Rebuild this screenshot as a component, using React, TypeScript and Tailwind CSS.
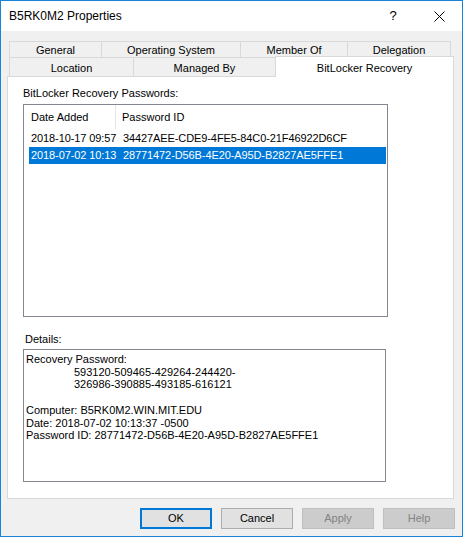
const font = "font-['Segoe_UI','Liberation_Sans',Arial,sans-serif]";

function Tab({ label, w, last }: { label: string; w: string; last?: boolean }) {
  return (
    <div
      className={`${w} h-full flex items-center justify-center pt-[2px] border-t border-l border-[#d9d9d9] ${last ? 'border-r' : ''} bg-[#f0f0f0] text-[11px] text-black whitespace-nowrap`}
    >
      {label}
    </div>
  );
}

function Button({ label, primary, disabled }: { label: string; primary?: boolean; disabled?: boolean }) {
  let cls = 'border border-[#adadad] bg-[#e1e1e1] text-black';
  if (primary) cls = 'border-2 border-[#0078d7] bg-[#e1e1e1] text-black';
  if (disabled) cls = 'border border-[#bfbfbf] bg-[#cccccc] text-[#838383]';
  return (
    <div className={`w-[72px] h-[21px] flex items-center justify-center text-[11px] ${cls}`}>{label}</div>
  );
}

const rows = [
  { date: '2018-10-17 09:57', id: '34427AEE-CDE9-4FE5-84C0-21F46922D6CF', selected: false },
  { date: '2018-07-02 10:13', id: '28771472-D56B-4E20-A95D-B2827AE5FFE1', selected: true },
];

export default function App() {
  return (
    <div className={`w-[463px] h-[537px] border border-[#1883d7] bg-[#f0f0f0] flex flex-col ${font}`}>
      {/* title bar */}
      <div className="h-[30px] bg-white flex items-center shrink-0">
        <span className="pl-[8px] text-[12px] text-black">B5RK0M2 Properties</span>
        <div className="ml-auto flex items-center h-full">
          <span className="w-[46px] text-center text-[13px] text-black">?</span>
          <div className="w-[46px] flex justify-center">
            <svg width="11" height="11" viewBox="0 0 11 11">
              <path d="M0.5 0.5 L10.5 10.5 M10.5 0.5 L0.5 10.5" stroke="#000" strokeWidth="1" />
            </svg>
          </div>
        </div>
      </div>

      {/* tabs */}
      <div className="pt-[10px] pl-[6px] pr-[8px]">
        <div className="flex h-[16px] ml-[2px]">
          <Tab label="General" w="w-[92px]" />
          <Tab label="Operating System" w="w-[139px]" />
          <Tab label="Member Of" w="w-[107px]" />
          <Tab label="Delegation" w="w-[104px]" last />
        </div>
        <div className="flex h-[19px] items-end">
          <div className="flex h-[19px] ml-[2px]">
            <Tab label="Location" w="w-[124px]" />
            <Tab label="Managed By" w="w-[142px]" />
          </div>
          <div className="relative z-10 w-[179px] h-[21px] -mb-px bg-white border-t border-l border-r border-[#d9d9d9] flex items-start justify-center pt-[3px] text-[11px] text-black">
            BitLocker Recovery
          </div>
        </div>

        {/* panel */}
        <div className="h-[423px] bg-white border border-[#d9d9d9] pl-[15px] pt-[10px] text-[11px] text-black">
          <div className="h-[13px] leading-[13px] mb-[4px]">BitLocker Recovery Passwords:</div>
          <div className="w-[365px] h-[213px] border border-[#828790] bg-white">
            <div className="h-[24px] flex items-center">
              <div className="w-[92px] h-full flex items-center pl-[7px] border-r border-[#e5e5e5]">Date Added</div>
              <div className="pl-[6px]">Password ID</div>
            </div>
            <div className="pt-[1px]">
              {rows.map((r) => (
                <div
                  key={r.id}
                  className={`ml-[5px] mr-px h-[17px] flex items-center whitespace-nowrap tracking-[-0.1px] ${r.selected ? 'bg-[#0078d7] text-white' : ''}`}
                >
                  <span className="w-[94px] pl-[2px] shrink-0">{r.date}</span>
                  <span>{r.id}</span>
                </div>
              ))}
            </div>
          </div>

          <div className="h-[13px] leading-[13px] mt-[16px] mb-[3px] pl-[2px]">Details:</div>
          <div className="w-[363px] h-[133px] border border-[#828790] bg-white pl-[2px] pt-[3px] leading-[12.7px]">
            <div>Recovery Password:</div>
            <div className="pl-[48px]">593120-509465-429264-244420-</div>
            <div className="pl-[48px]">326986-390885-493185-616121</div>
            <div>&nbsp;</div>
            <div>Computer: B5RK0M2.WIN.MIT.EDU</div>
            <div>Date: 2018-07-02 10:13:37 -0500</div>
            <div>Password ID: 28771472-D56B-4E20-A95D-B2827AE5FFE1</div>
          </div>
        </div>
      </div>

      {/* buttons */}
      <div className="flex justify-end gap-[9px] pr-[7px] pt-[9px]">
        <Button label="OK" primary />
        <Button label="Cancel" />
        <Button label="Apply" disabled />
        <Button label="Help" disabled />
      </div>
    </div>
  );
}
